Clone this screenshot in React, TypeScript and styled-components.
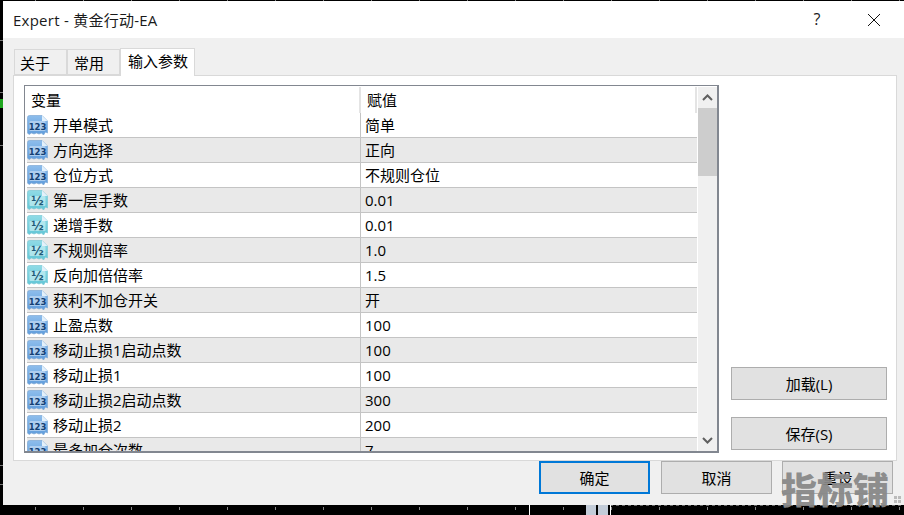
import React from 'react';
import styled, { createGlobalStyle } from 'styled-components';

const GlobalStyle = createGlobalStyle`
  html, body { margin: 0; padding: 0; background: #000; }
  * { box-sizing: border-box; }
`;

// the chart that shows behind the dialog: axis ticks, a few candles, grid dashes
const Stage = styled.div`
  position: relative;
  width: 904px;
  height: 515px;
  overflow: hidden;
  padding: 1px 0 0 3px;
  font-family: "Open Sans", "Noto Sans CJK SC", sans-serif;
  font-size: 15px;
  color: #000;
  background-color: #000;
  background-image:
    linear-gradient(#c3ccd8, #c3ccd8),
    linear-gradient(#c3ccd8, #c3ccd8),
    linear-gradient(#fff, #fff),
    linear-gradient(#fff, #fff),
    linear-gradient(#1fa51f, #1fa51f),
    linear-gradient(#777, #777),
    linear-gradient(#777, #777),
    linear-gradient(#777, #777),
    linear-gradient(#777, #777),
    linear-gradient(#777, #777),
    repeating-linear-gradient(90deg, #666 0 3px, transparent 3px 6px),
    repeating-linear-gradient(90deg, transparent 0 35px, #888 35px 36px, transparent 36px 48px),
    repeating-linear-gradient(90deg, transparent 0 35px, #888 35px 36px, transparent 36px 48px);
  background-size:
    10px 10px, 10px 10px, 1px 10px, 1px 10px,
    3px 9px, 3px 1px, 3px 1px, 3px 1px, 3px 1px, 3px 1px,
    294px 1px, 100% 3px, 100% 1px;
  background-position:
    586px 505px, 598px 505px, 529px 505px, 610px 505px,
    0 99px, 0 40px, 0 92px, 0 145px, 0 465px, 0 484px,
    610px 505px, 0 507px, 0 0;
  background-repeat: no-repeat;
`;

const Dialog = styled.div`
  width: 901px;
  height: 504px;
  background: #f0f0f0;
  display: flex;
  flex-direction: column;
`;

const TitleBar = styled.div`
  height: 37px;
  flex: none;
  background: #fff;
  display: flex;
  align-items: center;
  padding-left: 10px;
  color: #1a1a1a;
`;

const TitleText = styled.div`
  flex: 1;
  margin-top: -1px;
  letter-spacing: 0.25px;
`;

const HelpGlyph = styled.span`
  width: 20px;
  text-align: center;
  font-size: 16px;
  margin-top: -2px;
  margin-right: 40px;
`;

const CloseGlyph = styled.svg`
  width: 14px;
  height: 14px;
  margin-right: 23px;
`;

const TabRow = styled.div`
  height: 37px;
  flex: none;
  display: flex;
  align-items: flex-end;
  padding-left: 11px;
  position: relative;
  z-index: 1;
`;

const Tab = styled.div<{ $active?: boolean; $width: number; $inset: number }>`
  width: ${p => p.$width}px;
  height: ${p => (p.$active ? 28 : 26)}px;
  margin-bottom: ${p => (p.$active ? -1 : 0)}px;
  background: ${p => (p.$active ? '#fff' : '#f0f0f0')};
  border: 1px solid #d9d9d9;
  border-bottom: ${p => (p.$active ? 'none' : '1px solid #d9d9d9')};
  display: flex;
  align-items: center;
  padding-left: ${p => p.$inset}px;
  padding-top: ${p => (p.$active ? 0 : 2)}px;
  padding-bottom: ${p => (p.$active ? 2 : 0)}px;
  line-height: 1;
`;

const Panel = styled.div`
  margin-left: 10px;
  width: 884px;
  height: 386px;
  flex: none;
  background: #fff;
  border: 1px solid #d9d9d9;
  padding: 9px 9px 7px 10px;
  display: flex;
`;

const ListBox = styled.div`
  width: 695px;
  flex: none;
  height: 100%;
  border: 1px solid #828790;
  border-bottom-width: 2px;
  border-right-width: 2px;
  display: flex;
  overflow: hidden;
`;

const Rows = styled.div`
  flex: 1;
  min-width: 0;
  overflow: hidden;
`;

const HeaderRow = styled.div`
  height: 27px;
  display: grid;
  grid-template-columns: 336px 1fr;
  align-items: center;
`;

const HeaderCell = styled.div`
  height: 26px;
  margin-top: 1px;
  line-height: 26px;
  padding-left: 6px;
  border-right: 2px solid #e4e4e4;
`;

const Row = styled.div<{ $shaded: boolean }>`
  height: 25px;
  margin-left: 2px;
  display: grid;
  grid-template-columns: 334px 1fr;
  background: ${p => (p.$shaded ? '#e9e9e9' : '#fff')};
  border-bottom: 1px solid #c4c4c4;
`;

const NameCell = styled.div`
  display: flex;
  align-items: center;
  gap: 5px;
  border-right: 1px solid #c4c4c4;
  white-space: nowrap;
`;

const NameLabel = styled.span`
  margin-top: -2px;
`;

const ValueCell = styled.div`
  padding-left: 4px;
  line-height: 24px;
`;

const ScrollBar = styled.div`
  width: 19px;
  flex: none;
  margin-left: 1px;
  margin-top: 1px;
  background: #f0f0f0;
  display: flex;
  flex-direction: column;
`;

const ScrollArrow = styled.div`
  height: 21px;
  flex: none;
  display: flex;
  align-items: center;
  justify-content: center;
`;

const ScrollThumb = styled.div`
  height: 68px;
  flex: none;
  background: #cdcdcd;
`;

const ScrollTrack = styled.div`
  flex: 1;
`;

const SideColumn = styled.div`
  flex: 1;
  padding: 0 0 3px 12px;
  display: flex;
  flex-direction: column;
  justify-content: flex-end;
  gap: 17px;
`;

const SideButton = styled.div`
  width: 156px;
  height: 33px;
  background: #e1e1e1;
  border: 1px solid #adadad;
  display: flex;
  align-items: center;
  justify-content: center;
`;

const Footer = styled.div`
  display: flex;
  padding-left: 536px;
`;

const FooterButton = styled.div<{ $primary?: boolean; $gap: number }>`
  width: 111px;
  height: 33px;
  margin-right: ${p => p.$gap}px;
  background: #e1e1e1;
  border: ${p => (p.$primary ? '2px solid #0078d7' : '1px solid #adadad')};
  display: flex;
  align-items: center;
  justify-content: center;
`;

const Watermark = styled.div`
  position: absolute;
  left: 781px;
  top: 466px;
  font-family: "Noto Sans CJK SC", sans-serif;
  font-size: 36px;
  font-weight: 900;
  line-height: 44px;
  color: rgba(136, 136, 136, 0.95);
  white-space: nowrap;
`;

const Grip = styled.div`
  position: absolute;
  left: 894px;
  top: 496px;
  width: 7px;
  height: 7px;
  background-image: linear-gradient(#bbb, #bbb), linear-gradient(#bbb, #bbb), linear-gradient(#bbb, #bbb), linear-gradient(#bbb, #bbb);
  background-size: 3px 3px;
  background-position: 0 0, 4px 0, 0 4px, 4px 4px;
  background-repeat: no-repeat;
`;

const TypeIcon = ({ label }: { label: string }) => {
  const half = label !== '123';
  const id = half ? 'gradHalf' : 'gradInt';
  return (
    <svg width="21" height="21" viewBox="0 0 21 21" style={{ flex: 'none' }}>
      <defs>
        <linearGradient id={id} x1="0" y1="0" x2="0" y2="1">
          <stop offset="0" stopColor={half ? '#8fdbe6' : '#8dbdec'} />
          <stop offset="1" stopColor={half ? '#62c6d6' : '#5f9cdb'} />
        </linearGradient>
      </defs>
      <path
        d="M0.5 2.5 Q0.5 0.5 2.5 0.5 H15 L20.5 6 V18 L18.5 17 L16.5 20 L14.5 18 L12 19 L9.5 18 L7 19 L4.5 18 L2 19.5 L0.5 18 Z"
        fill={`url(#${id})`}
        stroke={half ? '#7cc9d6' : '#7fa9d6'}
        strokeWidth="0.7"
      />
      <path d="M15 0.5 V6 H20.5 Z" fill="#e4f1fb" />
      <rect x="2.5" y="6" width="16" height="10" rx="1" fill={half ? '#c9eff4' : '#c5dcf4'} opacity="0.7" />
      <text
        x="10.5"
        y={half ? 15 : 14.5}
        textAnchor="middle"
        fontFamily="'DejaVu Sans', sans-serif"
        fontSize={half ? 12 : 8.5}
        fontWeight="700"
        fill={half ? '#1d5a78' : '#123f73'}
      >
        {half ? '½' : '123'}
      </text>
    </svg>
  );
};

const params: [string, string, string][] = [
  ['123', '开单模式', '简单'],
  ['123', '方向选择', '正向'],
  ['123', '仓位方式', '不规则仓位'],
  ['1/2', '第一层手数', '0.01'],
  ['1/2', '递增手数', '0.01'],
  ['1/2', '不规则倍率', '1.0'],
  ['1/2', '反向加倍倍率', '1.5'],
  ['123', '获利不加仓开关', '开'],
  ['123', '止盈点数', '100'],
  ['123', '移动止损1启动点数', '100'],
  ['123', '移动止损1', '100'],
  ['123', '移动止损2启动点数', '300'],
  ['123', '移动止损2', '200'],
  ['123', '最多加仓次数', '7'],
];

export default function App() {
  return (
    <Stage>
      <GlobalStyle />
      <Dialog>
        <TitleBar>
          <TitleText>Expert - 黄金行动-EA</TitleText>
          <HelpGlyph>?</HelpGlyph>
          <CloseGlyph viewBox="0 0 14 14">
            <path d="M1 1 L13 13 M13 1 L1 13" stroke="#111" strokeWidth="1" fill="none" />
          </CloseGlyph>
        </TitleBar>
        <TabRow>
          <Tab $width={53} $inset={5}>关于</Tab>
          <Tab $width={53} $inset={6}>常用</Tab>
          <Tab $width={75} $inset={7} $active>输入参数</Tab>
        </TabRow>
        <Panel>
          <ListBox>
            <Rows>
              <HeaderRow>
                <HeaderCell>变量</HeaderCell>
                <HeaderCell>赋值</HeaderCell>
              </HeaderRow>
              {params.map(([kind, name, value], i) => (
                <Row key={name} $shaded={i % 2 === 1}>
                  <NameCell>
                    <TypeIcon label={kind} />
                    <NameLabel>{name}</NameLabel>
                  </NameCell>
                  <ValueCell>{value}</ValueCell>
                </Row>
              ))}
            </Rows>
            <ScrollBar>
              <ScrollArrow>
                <svg width="11" height="7" viewBox="0 0 11 7">
                  <path d="M1 6 L5.5 1.5 L10 6" stroke="#606060" strokeWidth="2" fill="none" />
                </svg>
              </ScrollArrow>
              <ScrollThumb />
              <ScrollTrack />
              <ScrollArrow>
                <svg width="11" height="7" viewBox="0 0 11 7">
                  <path d="M1 1 L5.5 5.5 L10 1" stroke="#606060" strokeWidth="2" fill="none" />
                </svg>
              </ScrollArrow>
            </ScrollBar>
          </ListBox>
          <SideColumn>
            <SideButton>加载(L)</SideButton>
            <SideButton>保存(S)</SideButton>
          </SideColumn>
        </Panel>
        <Footer>
          <FooterButton $primary $gap={11}>确定</FooterButton>
          <FooterButton $gap={10}>取消</FooterButton>
          <FooterButton $gap={0}>重设</FooterButton>
        </Footer>
      </Dialog>
      <Watermark>指标铺</Watermark>
      <Grip />
    </Stage>
  );
}
